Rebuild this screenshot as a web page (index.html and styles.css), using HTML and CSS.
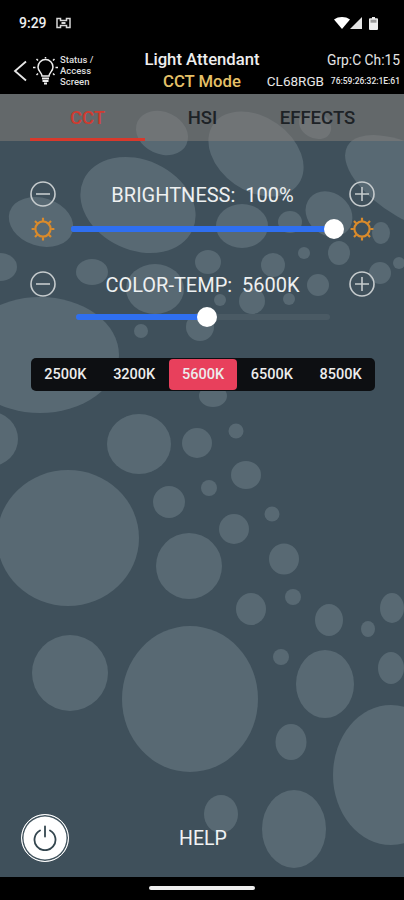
FILE: index.html
```html
<!DOCTYPE html>
<html lang="en">
<head>
  <meta charset="UTF-8" />
  <title>Light Attendant</title>
  <meta name="viewport" content="width=device-width, initial-scale=1.0" />
  <link rel="stylesheet" href="styles.css">
</head>
<body>
  <div class="phone">
    <div class="status-bar">
      <span class="clock">9:29</span>
      <svg class="status-app" width="15" height="12" viewBox="0 0 15 12">
        <path d="M1 1.5h3.5v2h6v-2H14v9h-3.500v-2h-6v2H1z" fill="none" stroke="#d8d8d8" stroke-width="1.500"/>
        <path d="M5.500 5h4v2h-4z" fill="#d8d8d8"/>
      </svg>
      <span class="status-spacer"></span>
      <svg width="16" height="12" viewBox="0 0 16 12"><path d="M0 2.500C4.500-.8 11.500-.8 16 2.500L8 12z" fill="#fff"/></svg>
      <svg width="12" height="12" viewBox="0 0 12 12"><path d="M12 0v12H0z" fill="#e4e4e4"/></svg>
      <svg class="status-battery" width="9" height="13" viewBox="0 0 9 13"><path d="M3 0h3v1.200h2a1 1 0 0 1 1 1V12a1 1 0 0 1-1 1H1a1 1 0 0 1-1-1V2.200a1 1 0 0 1 1-1h2z" fill="#eee"/><path d="M1.500 2.700h6v3h-6z" fill="#9a9a9a"/></svg>
    </div>

    <header class="app-header">
      <div class="header-left">
        <svg width="14" height="22" viewBox="0 0 14 22"><path d="M13 1.500 2 11l11 9.500" fill="none" stroke="#e6e6e6" stroke-width="1.800"/></svg>
        <svg class="bulb" width="25" height="28" viewBox="0 0 25 28" fill="none" stroke="#eee" stroke-width="1.500">
          <path d="M9 19c0-3.500-4-4.500-4-9a7.500 7.500 0 0 1 15 0c0 4.500-4 5.500-4 9z"/>
          <path d="M9 21.500h7M9.500 24h6M11 26.500h3" stroke-width="2"/>
          <path d="M12.500 0v1.500M3.500 2l1.500 1.500M21.500 2 20 3.500M0 10.500h2.500M22.500 10.500H25M3.500 18l1.500-1.500M21.500 18 20 16.500"/>
        </svg>
        <div class="status-link">Status /<br>Access<br>Screen</div>
      </div>
      <div class="header-title">
        <div class="app-name">Light Attendant</div>
        <div class="mode-name">CCT Mode</div>
      </div>
      <div class="header-right">
        <div class="channel">Grp:C Ch:15</div>
        <div class="device"><span>CL68RGB</span><span class="mac">76:59:26:32:1E:61</span></div>
      </div>
    </header>

    <main class="main">
      <svg class="bubbles" viewBox="0 94 404 783" width="404" height="783">
        <g fill="#586973">
          <ellipse cx="162" cy="133" rx="27" ry="21" transform="rotate(25 162 133)"/>
          <ellipse cx="256" cy="154" rx="52" ry="37" transform="rotate(35 256 154)"/>
          <ellipse cx="415" cy="185" rx="78" ry="36" transform="rotate(30 415 185)"/>
          <ellipse cx="315" cy="125" rx="17" ry="13" transform="rotate(30 315 125)"/>
          <ellipse cx="138" cy="205" rx="60" ry="45" transform="rotate(25 138 205)"/>
          <ellipse cx="41" cy="222" rx="33" ry="24" transform="rotate(18 41 222)"/>
          <ellipse cx="242" cy="226" rx="26" ry="22"/>
          <ellipse cx="290" cy="222" rx="12" ry="11"/>
          <ellipse cx="329" cy="214" rx="25" ry="21" transform="rotate(40 329 214)"/>
          <ellipse cx="381" cy="233" rx="9" ry="11"/>
          <ellipse cx="339" cy="253" rx="11" ry="12"/>
          <circle cx="304" cy="253" r="6"/>
          <circle cx="273" cy="265" r="12"/>
          <ellipse cx="208" cy="262" rx="13" ry="12"/>
          <circle cx="399" cy="263" r="6"/>
          <circle cx="380" cy="273" r="11"/>
          <circle cx="318" cy="285" r="11"/>
          <circle cx="252" cy="301" r="13"/>
          <circle cx="220" cy="300" r="6"/>
          <circle cx="289" cy="299" r="6"/>
          <ellipse cx="155" cy="289" rx="29" ry="25"/>
          <ellipse cx="92" cy="272" rx="16" ry="13"/>
          <ellipse cx="0" cy="267" rx="17" ry="14"/>
          <ellipse cx="40" cy="355" rx="79" ry="58"/>
          <circle cx="141" cy="331" r="7"/>
          <circle cx="200" cy="327" r="14"/>
          <ellipse cx="213" cy="396" rx="14" ry="11"/>
          <ellipse cx="-9" cy="439" rx="27" ry="27"/>
          <ellipse cx="139" cy="444" rx="32" ry="30"/>
          <circle cx="197" cy="443" r="15"/>
          <circle cx="236" cy="431" r="7.500"/>
          <ellipse cx="246" cy="475" rx="15" ry="14"/>
          <circle cx="209" cy="488" r="8"/>
          <circle cx="169" cy="502" r="16"/>
          <circle cx="272" cy="514" r="7.500"/>
          <circle cx="234" cy="529" r="15"/>
          <ellipse cx="68" cy="538" rx="71" ry="68"/>
          <circle cx="189" cy="566" r="33"/>
          <ellipse cx="284" cy="559" rx="15" ry="15.500"/>
          <circle cx="293" cy="597" r="8"/>
          <ellipse cx="251" cy="609" rx="15" ry="16"/>
          <ellipse cx="329" cy="620" rx="14" ry="16"/>
          <ellipse cx="392" cy="608" rx="12" ry="15"/>
          <ellipse cx="368" cy="629" rx="7" ry="8"/>
          <ellipse cx="70" cy="673" rx="38" ry="38"/>
          <ellipse cx="190" cy="699" rx="68" ry="73"/>
          <circle cx="281" cy="657" r="8"/>
          <ellipse cx="325" cy="684" rx="29" ry="34"/>
          <ellipse cx="391" cy="668" rx="13" ry="16"/>
          <ellipse cx="291" cy="742" rx="15.500" ry="18"/>
          <ellipse cx="391" cy="775" rx="58" ry="70"/>
          <ellipse cx="221" cy="814" rx="17" ry="19"/>
          <ellipse cx="294" cy="829" rx="32" ry="39"/>
        </g>
      </svg>

      <nav class="tabs">
        <div class="tab tab-active">CCT</div>
        <div class="tab">HSI</div>
        <div class="tab">EFFECTS</div>
      </nav>

      <section class="controls">
        <div class="control-row">
          <svg class="round-btn" viewBox="0 0 26 26"><circle cx="13" cy="13" r="12"/><path d="M6 13h14"/></svg>
          <div class="control-label">BRIGHTNESS:&nbsp; 100%</div>
          <svg class="round-btn" viewBox="0 0 26 26"><circle cx="13" cy="13" r="12"/><path d="M6 13h14M13 6v14"/></svg>
        </div>
        <div class="slider-row">
          <svg class="sun" viewBox="0 0 24 24"><circle cx="12" cy="12" r="7"/><path d="M12 1.500v3M12 19.500v3M1.500 12h3M19.500 12h3M4.600 4.600l2 2M17.400 17.400l2 2M4.600 19.400l2-2M17.400 6.600l2-2"/></svg>
          <div class="slider slider-bright">
            <div class="slider-fill" style="width: 100%"></div>
            <div class="slider-thumb"></div>
          </div>
          <svg class="sun" viewBox="0 0 24 24"><circle cx="12" cy="12" r="7"/><path d="M12 1.500v3M12 19.500v3M1.500 12h3M19.500 12h3M4.600 4.600l2 2M17.400 17.400l2 2M4.600 19.400l2-2M17.400 6.600l2-2"/></svg>
        </div>
        <div class="control-row control-row-temp">
          <svg class="round-btn" viewBox="0 0 26 26"><circle cx="13" cy="13" r="12"/><path d="M6 13h14"/></svg>
          <div class="control-label">COLOR-TEMP:&nbsp; 5600K</div>
          <svg class="round-btn" viewBox="0 0 26 26"><circle cx="13" cy="13" r="12"/><path d="M6 13h14M13 6v14"/></svg>
        </div>
        <div class="slider slider-temp">
          <div class="slider-fill" style="width: 51.500%"></div>
          <div class="slider-thumb"></div>
        </div>
        <div class="presets">
          <div class="preset">2500K</div>
          <div class="preset">3200K</div>
          <div class="preset preset-active">5600K</div>
          <div class="preset">6500K</div>
          <div class="preset">8500K</div>
        </div>
      </section>

      <footer class="app-footer">
        <div class="power">
          <svg width="26" height="26" viewBox="0 0 26 26" fill="none" stroke="#34464f" stroke-width="1.800" stroke-linecap="round">
            <path d="M8 5.500a10.500 10.500 0 1 0 10 0"/>
            <path d="M13 1.500v10"/>
          </svg>
        </div>
        <div class="help">HELP</div>
      </footer>
    </main>

    <div class="nav-bar"><div class="nav-pill"></div></div>
  </div>
</body>
</html>
```

FILE: styles.css
```css
* { box-sizing: border-box; }

html, body {
  margin: 0;
  padding: 0;
  background: black;
  font-family: Roboto, "Liberation Sans", sans-serif;
  overflow: hidden;
}

.phone {
  width: 404px;
  height: 900px;
  display: flex;
  flex-direction: column;
  background: black;
  color: white;
}

/* status bar */
.status-bar {
  height: 47px;
  flex: none;
  display: flex;
  align-items: center;
  padding: 0 26px 1px 19px;
}
.clock { font-size: 14px; font-weight: 500; color: #eee; }
.status-app { margin-left: 9px; }
.status-spacer { flex: 1; }
.status-battery { margin-left: 7px; }

/* app header */
.app-header {
  height: 47px;
  flex: none;
  display: grid;
  grid-template-columns: 1fr auto 1fr;
  align-items: center;
}
.header-left {
  display: flex;
  align-items: center;
  padding-left: 13px;
}
.bulb { margin-left: 6px; }
.status-link {
  margin-left: 2px;
  font-size: 9.500px;
  font-weight: 500;
  line-height: 11px;
  color: #ddd;
}
.header-title { text-align: center; }
.app-name { font-size: 16.700px; font-weight: 500; line-height: 22px; color: #eee; }
.mode-name { font-size: 16.700px; font-weight: 500; line-height: 22px; color: #e5c168; }
.header-right {
  font-size: 13.800px;
  color: #e6e6e6;
  text-align: right;
  padding-right: 4px;
  line-height: 21px;
  white-space: nowrap;
}
.device { display: flex; justify-content: flex-end; align-items: center; gap: 6px; font-size: 13.500px; }
.mac { font-size: 8.500px; font-weight: 500; width: 70px; }

/* main area */
.main {
  position: relative;
  flex: 1;
  display: flex;
  flex-direction: column;
  background: #3f505b;
  overflow: hidden;
}
.bubbles { position: absolute; top: 0; left: 0; }

.tabs {
  position: relative;
  height: 47px;
  flex: none;
  display: flex;
  padding: 0 29px 0 30px;
  background: rgba(135, 128, 122, 0.5);
}
.tab {
  width: 115px;
  font-size: 18.500px;
  font-weight: 500;
  line-height: 48px;
  text-align: center;
  color: #1d2226;
}
.tab-active { color: #cf3b30; border-bottom: 3px solid #d8392c; }

.controls {
  position: relative;
  display: flex;
  flex-direction: column;
  padding: 40px 29px 0 30px;
}
.control-row {
  height: 26px;
  display: flex;
  align-items: center;
  justify-content: space-between;
}
.control-row-temp { margin-top: 30px; }
.control-label { font-size: 20px; padding-top: 1px; color: #eef0f1; }
.round-btn {
  width: 26px;
  height: 26px;
  fill: none;
  stroke: #c6cbcd;
  stroke-width: 1.600;
}

.slider-row {
  display: flex;
  align-items: center;
  margin-top: 10px;
  height: 24px;
}
.sun {
  width: 26px;
  height: 26px;
  flex: none;
  fill: none;
  stroke: #d98a2b;
  stroke-width: 2;
}

.slider { position: relative; height: 6px; border-radius: 3px; }
.slider-bright { flex: 1; margin: 0 15px; background: #2f6ff0; }
.slider-temp {
  width: 254px;
  margin: 17px 0 0 46px;
  background: rgba(255, 255, 255, 0.06);
}
.slider-fill { height: 100%; background: #2f6ff0; border-radius: 3px; }
.slider-thumb {
  position: absolute;
  top: -7px;
  left: 100%;
  width: 20px;
  height: 20px;
  margin-left: -10px;
  background: white;
  border-radius: 50%;
}
.slider-temp .slider-thumb { left: 51.500%; }

.presets {
  display: grid;
  grid-template-columns: repeat(5, 1fr);
  width: 344px;
  height: 33px;
  margin-left: 1px;
  margin-top: 38px;
  padding: 1px 0;
  background: #0d0f12;
  border-radius: 5px;
}
.preset {
  display: flex;
  align-items: center;
  justify-content: center;
  font-size: 14.500px;
  font-weight: 500;
  color: #ececec;
  border-radius: 4px;
}
.preset-active { background: #e8405c; }

/* bottom */
.app-footer {
  position: relative;
  margin-top: auto;
  height: 48px;
  margin-bottom: 15px;
  padding-left: 21px;
  display: flex;
  align-items: center;
}
.power {
  width: 48px;
  height: 48px;
  flex: none;
  display: flex;
  align-items: center;
  justify-content: center;
  background: white;
  border-radius: 50%;
  border: 1px solid white;
  box-shadow: inset 0 0 0 1.500px #42545e;
}
.help {
  width: 116px;
  margin-left: 76px;
  text-align: center;
  font-size: 19.500px;
  color: #f1f3f4;
}

.nav-bar {
  height: 23px;
  flex: none;
  display: flex;
  justify-content: center;
  padding-top: 9px;
  background: black;
}
.nav-pill { width: 106px; height: 4px; background: #eee; border-radius: 2px; }
```
